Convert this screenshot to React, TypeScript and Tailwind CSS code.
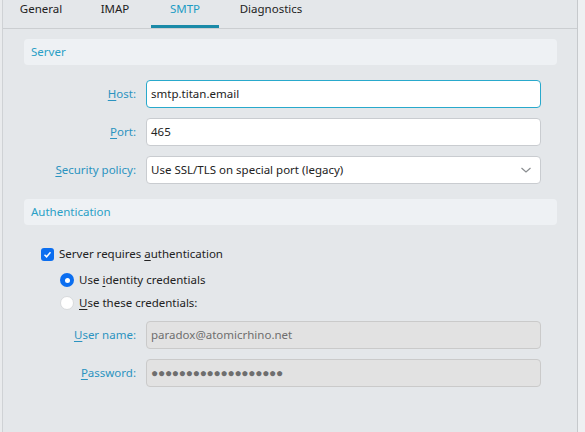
import React from 'react';

const font = { fontFamily: '"Noto Sans", "Open Sans", sans-serif' };

function Label({ accel, rest }: { accel: string; rest: string }) {
  return (
    <span className="w-[143px] shrink-0 text-right text-[11.5px] text-[#2b93c0] pr-[10px]">
      <span className="underline underline-offset-2">{accel}</span>
      {rest}
    </span>
  );
}

function SectionHeader({ title }: { title: string }) {
  return (
    <div className="ml-[21px] mr-[20px] h-[26px] rounded-[4px] bg-[#eef1f4] flex items-center px-[7px] text-[11.5px] text-[#2aa0c6]">
      {title}
    </div>
  );
}

export default function App() {
  return (
    <div style={font} className="w-[585px] h-[432px] bg-[#e4e7ea] flex overflow-hidden text-[#222]">
      <div className="w-[3px] bg-[#e9ebed] border-r border-[#cfd2d5]" />
      <div className="flex-1 flex flex-col border-r border-[#c6c9cc]">
        {/* Tabs */}
        <div className="h-[29px] flex border-b border-[#cbced1] text-[11.5px]">
          <div className="w-[76px] flex justify-center pt-[0px]">General</div>
          <div className="w-[72px] flex justify-center">IMAP</div>
          <div className="w-[68px] flex justify-center text-[#1c9cc4] border-b-[3px] border-[#1a8aa8]">SMTP</div>
          <div className="w-[104px] flex justify-center">Diagnostics</div>
        </div>

        <div className="pt-[10px]">
          <SectionHeader title="Server" />
          <div className="flex flex-col gap-[10px] mt-[15px] pr-[36px]">
            <div className="flex items-center">
              <Label accel="H" rest="ost:" />
              <div className="flex-1 h-[28px] rounded-[4px] bg-white border border-[#29a9cc] flex items-center px-[4px] text-[11.5px]">
                smtp.titan.email
              </div>
            </div>
            <div className="flex items-center">
              <Label accel="P" rest="ort:" />
              <div className="flex-1 h-[28px] rounded-[4px] bg-white border border-[#c9ccd0] flex items-center px-[4px] text-[11.5px]">
                465
              </div>
            </div>
            <div className="flex items-center">
              <Label accel="S" rest="ecurity policy:" />
              <div className="flex-1 h-[28px] rounded-[4px] bg-white border border-[#c9ccd0] flex items-center justify-between px-[4px] text-[11.5px]">
                <span>Use SSL/TLS on special port (legacy)</span>
                <svg width="12" height="8" viewBox="0 0 12 8" className="mr-[4px]">
                  <path d="M1.5 2 L6 6 L10.5 2" fill="none" stroke="#8a8d90" strokeWidth="1.2" />
                </svg>
              </div>
            </div>
          </div>

          <div className="mt-[15px]">
            <SectionHeader title="Authentication" />
          </div>

          <div className="mt-[19px] h-[20px] pl-[38px] flex items-center text-[11.5px]">
            <span className="w-[13px] h-[13px] rounded-[3px] bg-[#0b6ef0] flex items-center justify-center">
              <svg width="9" height="9" viewBox="0 0 9 9">
                <path d="M1.5 4.8 L3.6 6.8 L7.5 2.2" fill="none" stroke="white" strokeWidth="1.5" />
              </svg>
            </span>
            <span className="ml-[5px]">
              Server requires <span className="underline underline-offset-2">a</span>uthentication
            </span>
          </div>

          <div className="mt-[6px] h-[20px] pl-[57px] flex items-center text-[11.5px]">
            <span className="w-[14px] h-[14px] rounded-full bg-[#0b6ef0] flex items-center justify-center">
              <span className="w-[5px] h-[5px] rounded-full bg-white" />
            </span>
            <span className="ml-[5px]">
              Use <span className="underline underline-offset-2">i</span>dentity credentials
            </span>
          </div>

          <div className="mt-[3px] h-[20px] pl-[57px] flex items-center text-[11.5px]">
            <span className="w-[14px] h-[14px] rounded-full bg-white border border-[#d8dadc]" />
            <span className="ml-[5px]">
              <span className="underline underline-offset-2">U</span>se these credentials:
            </span>
          </div>

          <div className="flex flex-col gap-[10px] mt-[8px] pr-[36px]">
            <div className="flex items-center">
              <Label accel="U" rest="ser name:" />
              <div className="flex-1 h-[28px] rounded-[4px] bg-[#e2e2e2] border border-[#cacaca] flex items-center px-[4px] text-[11.5px] text-[#6e6e6e]">
                paradox@atomicrhino.net
              </div>
            </div>
            <div className="flex items-center">
              <Label accel="P" rest="assword:" />
              <div className="flex-1 h-[28px] rounded-[4px] bg-[#e2e2e2] border border-[#cacaca] flex items-center px-[4px] text-[12px] text-[#6e6e6e] tracking-[-0.3px]">
                ●●●●●●●●●●●●●●●●●●●
              </div>
            </div>
          </div>
        </div>
      </div>
      <div className="w-[7px] bg-[#eef0f2]" />
    </div>
  );
}
